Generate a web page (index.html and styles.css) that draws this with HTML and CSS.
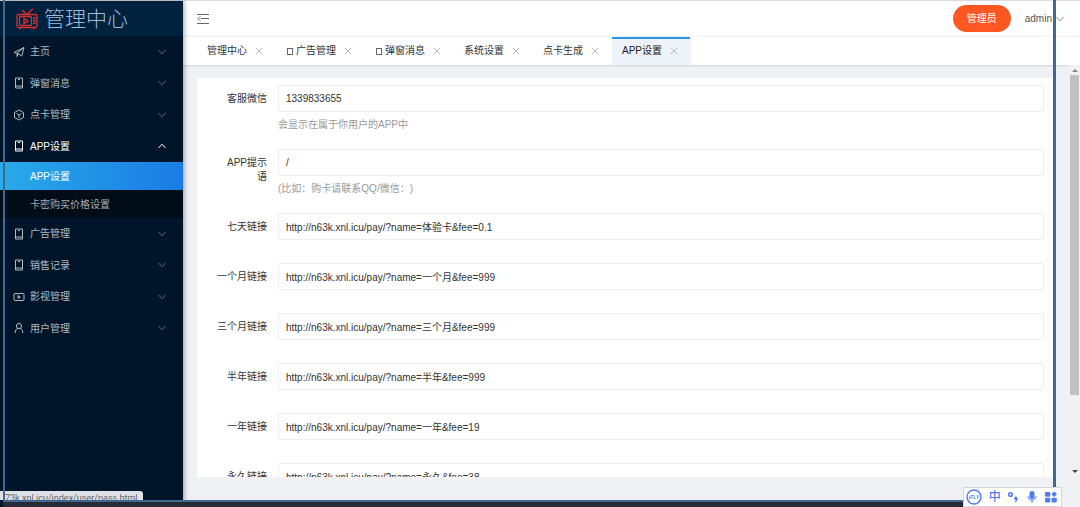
FILE: index.html
```html
<!DOCTYPE html>
<html lang="zh-CN">
<head>
<meta charset="utf-8">
<title>管理中心</title>
<link rel="stylesheet" href="styles.css">
</head>
<body>
<svg class="defs" aria-hidden="true">
  <symbol id="down" viewBox="0 0 10 10"><path d="M1.500 3l3.500 3.800L8.500 3"/></symbol>
  <symbol id="up" viewBox="0 0 10 10"><path d="M1.500 7L5 3.200 8.500 7"/></symbol>
  <symbol id="close" viewBox="0 0 8 8"><path d="M1 1l6 6M7 1L1 7"/></symbol>
  <symbol id="phone" viewBox="0 0 12 12"><path d="M2.500 1h7v10h-7zM2.500 9h7M5 2.500h2"/></symbol>
  <symbol id="plane" viewBox="0 0 12 12"><path d="M1 6.500L11 1.500 8.800 10 5.600 7.900zM11 1.500L4 7.300V10.500L5.600 8"/></symbol>
  <symbol id="cube" viewBox="0 0 12 12"><path d="M6 1l4.500 2.500v5L6 11 1.500 8.500v-5zM3.500 4.500L6 6l2.500-1.500M6 6v3"/></symbol>
  <symbol id="video" viewBox="0 0 12 12"><rect x="1" y="2.500" width="10" height="7" rx="1"/><path d="M5 4.500v3L7.300 6z"/></symbol>
  <symbol id="user" viewBox="0 0 12 12"><circle cx="6" cy="4" r="2.600"/><path d="M2.200 11c0-3 1.300-4.600 3-4.600M9.800 11c0-3-1.300-4.600-3-4.600"/></symbol>
</svg>
<div class="app">
  <aside class="sidebar">
    <div class="logo">
      <svg class="logo-icon" viewBox="0 0 22 22" aria-hidden="true"><path d="M6 2l5 4.500L17 .8"/><rect x="1" y="6.500" width="20" height="13" rx="1.500"/><rect x="3.500" y="8.500" width="12" height="9" rx="1"/><path d="M8 10.500v5l4-2.500zM17 10h3M17 12.500h3M17 15h3M4 20v1.500M18 20v1.500"/></svg>
      <span>管理中心</span>
    </div>
    <nav>
      <ul class="menu">
        <li><button class="item"><svg><use href="#plane"/></svg><span>主页</span><svg class="arrow"><use href="#down"/></svg></button></li>
        <li><button class="item"><svg><use href="#phone"/></svg><span>弹窗消息</span><svg class="arrow"><use href="#down"/></svg></button></li>
        <li><button class="item"><svg><use href="#cube"/></svg><span>点卡管理</span><svg class="arrow"><use href="#down"/></svg></button></li>
        <li><button class="item open"><svg><use href="#phone"/></svg><span>APP设置</span><svg class="arrow"><use href="#up"/></svg></button>
          <div class="submenu"><a class="current" href="#">APP设置</a><a href="#">卡密购买价格设置</a></div></li>
        <li><button class="item"><svg><use href="#phone"/></svg><span>广告管理</span><svg class="arrow"><use href="#down"/></svg></button></li>
        <li><button class="item"><svg><use href="#phone"/></svg><span>销售记录</span><svg class="arrow"><use href="#down"/></svg></button></li>
        <li><button class="item"><svg><use href="#video"/></svg><span>影视管理</span><svg class="arrow"><use href="#down"/></svg></button></li>
        <li><button class="item"><svg><use href="#user"/></svg><span>用户管理</span><svg class="arrow"><use href="#down"/></svg></button></li>
      </ul>
    </nav>
  </aside>
  <div class="main">
    <header class="header">
      <button class="fold" aria-label="折叠菜单"><svg viewBox="0 0 12 12"><path d="M0 1.500h12M4 5.500h8M0 10.500h12M3 3.500L1 5.500l2 2"/></svg></button>
      <button class="role">管理员</button>
      <button class="account">admin<svg><use href="#down"/></svg></button>
    </header>
    <div class="tabs">
      <div class="tab"><a href="#">管理中心</a><button aria-label="关闭"><svg><use href="#close"/></svg></button></div>
      <div class="tab"><i class="box"></i><a href="#">广告管理</a><button aria-label="关闭"><svg><use href="#close"/></svg></button></div>
      <div class="tab"><i class="box"></i><a href="#">弹窗消息</a><button aria-label="关闭"><svg><use href="#close"/></svg></button></div>
      <div class="tab"><a href="#">系统设置</a><button aria-label="关闭"><svg><use href="#close"/></svg></button></div>
      <div class="tab"><a href="#">点卡生成</a><button aria-label="关闭"><svg><use href="#close"/></svg></button></div>
      <div class="tab active"><a href="#">APP设置</a><button aria-label="关闭"><svg><use href="#close"/></svg></button></div>
    </div>
    <div class="content">
      <form class="card">
        <div class="row"><label for="wx">客服微信</label><div class="field"><input id="wx" value="1339833655"><p>会显示在属于你用户的APP中</p></div></div>
        <div class="row"><label for="tip">APP提示<wbr>语</label><div class="field"><input id="tip" value="/"><p>(比如：购卡请联系QQ/微信：)</p></div></div>
        <div class="row"><label for="d7">七天链接</label><div class="field"><input id="d7" value="http://n63k.xnl.icu/pay/?name=体验卡&amp;fee=0.1"></div></div>
        <div class="row"><label for="m1">一个月链接</label><div class="field"><input id="m1" value="http://n63k.xnl.icu/pay/?name=一个月&amp;fee=999"></div></div>
        <div class="row"><label for="m3">三个月链接</label><div class="field"><input id="m3" value="http://n63k.xnl.icu/pay/?name=三个月&amp;fee=999"></div></div>
        <div class="row"><label for="m6">半年链接</label><div class="field"><input id="m6" value="http://n63k.xnl.icu/pay/?name=半年&amp;fee=999"></div></div>
        <div class="row"><label for="y1">一年链接</label><div class="field"><input id="y1" value="http://n63k.xnl.icu/pay/?name=一年&amp;fee=19"></div></div>
        <div class="row"><label for="ever">永久链接</label><div class="field"><input id="ever" value="http://n63k.xnl.icu/pay/?name=永久&amp;fee=38"></div></div>
      </form>
      <div class="scrollbar"><i class="tri-up"></i><i class="thumb"></i><i class="tri-down"></i></div>
    </div>
  </div>
</div>
<div class="status">73k.xnl.icu/index/user/pass.html</div>
<div class="taskbar"></div>
<div class="frame"></div>
<div class="ime">
  <svg viewBox="0 0 16 16" class="ifly"><circle cx="8" cy="8" r="7"/><text x="8" y="10">iFLY</text></svg>
  <span>中</span>
  <svg viewBox="0 0 12 12" class="punct"><circle cx="3.500" cy="3.500" r="1.800"/><path class="solid" d="M8.500 5.500a2 2 0 0 1 2 2.200Q10.500 10.500 8 11.500V10.200q.8-.4.900-1A1.900 1.900 0 0 1 8.500 5.500z"/></svg>
  <svg viewBox="0 0 12 12"><rect class="solid" x="3.500" y="0" width="5" height="8" rx="2.500"/><path d="M2 5c0 5.500 8 5.500 8 0M6 9v3"/></svg>
  <svg viewBox="0 0 12 12" class="solid"><rect x="0" y="1" width="5.300" height="4.800" rx="1"/><path d="M9.200.3L12 3.200 9.200 6 6.300 3.200z"/><rect x="0" y="6.800" width="5.300" height="4.800" rx="1"/><rect x="6.500" y="6.800" width="5.300" height="4.800" rx="1"/></svg>
</div>
</body>
</html>
```
FILE: styles.css
```css
* { box-sizing: border-box; }
body {
  margin: 0;
  font: 10px/14px "Liberation Sans", "Noto Sans CJK SC", sans-serif;
  color: #333;
  overflow: hidden;
}
button, input { font: inherit; color: inherit; border: 0; padding: 0; margin: 0; background: none; }
a { color: inherit; text-decoration: none; }
svg { fill: none; stroke: currentColor; stroke-width: 1; flex: none; }
.defs { position: absolute; width: 0; height: 0; }

.app { display: flex; height: 100vh; border-top: 1px solid #dcdcdc; }

.sidebar {
  flex: none;
  width: 183px;
  background: #001529;
  box-shadow: 1px 0 5px rgba(0, 21, 41, .4);
  z-index: 1;
}
.logo {
  display: flex;
  align-items: center;
  gap: 6px;
  height: 35px;
  padding-left: 16px;
  background: #00223f;
  color: #9dbbdb;
  font-size: 21px;
  font-weight: 300;
  line-height: 30px;
}
.logo-icon { width: 22px; height: 22px; color: #d8302f; stroke-width: 1.300; }
.menu { list-style: none; margin: 0; padding: 0; }
.item {
  display: flex;
  align-items: center;
  width: 100%;
  height: 31px;
  padding: 0 16px 0 13px;
  color: #b3b9bf;
  text-align: left;
}
.menu li:nth-child(even) .item { height: 32px; }
.item svg { width: 12px; height: 12px; }
.item span { flex: 1; margin-left: 5px; padding-top: 1px; }
.item .arrow { width: 10px; height: 10px; color: #5d6c7b; }
.item.open, .item.open .arrow { color: #fff; }
.submenu { background: #000c17; }
.submenu a { display: block; height: 28px; padding-left: 30px; line-height: 30px; color: #a6acb1; }
.submenu .current { background: linear-gradient(90deg, #29aaea, #1a7ce4); color: #fff; }

.main { flex: 1; min-width: 0; display: flex; flex-direction: column; background: #f0f1f5; }
.header {
  display: flex;
  align-items: center;
  height: 35px;
  padding: 0 15px 0 14px;
  background: #fff;
}
.fold { display: flex; margin-right: auto; color: #666; }
.fold svg { width: 12px; height: 12px; }
.role { height: 27px; padding: 0 14px; border-radius: 14px; background: #ff5722; color: #fff; }
.account { display: flex; align-items: center; gap: 3px; margin-left: 14px; color: #555; }
.account svg { width: 10px; height: 10px; color: #888; }

.tabs {
  display: flex;
  height: 29px;
  padding-left: 14px;
  background: #fff;
  border-top: 1px solid #f3f3f3;
  box-shadow: 0 1px 2px rgba(0, 0, 0, .12);
}
.tab { display: flex; align-items: center; padding: 0 12px 0 10px; border-right: 1px solid transparent; }
.tab .box { width: 6px; height: 7px; margin: 0 3px 0 1px; border: 1px solid #666; }
.tab button { display: flex; margin-left: 8px; color: #bbb; }
.tab button svg { width: 8px; height: 8px; }
.tab.active { background: #eef2f9; box-shadow: inset 0 2px #2a93e2; color: #222; }

.content { flex: 1; min-height: 0; display: flex; }
.card {
  flex: 1;
  min-width: 0;
  margin: 13px 16px 30px 14px;
  padding: 7px 9px 0 20px;
  background: #fff;
  overflow: hidden;
}
.row { display: flex; margin-bottom: 23px; }
.row label { flex: none; width: 50px; margin-right: 11px; padding-top: 7px; text-align: right; }
.row:nth-child(2) label { padding-left: 2px; }
.field { flex: 1; min-width: 0; }
.field input {
  display: block;
  width: 100%;
  height: 27px;
  padding: 0 7px;
  border: 1px solid #eee;
  border-radius: 2px;
  background: #fff;
}
.field p { margin: 6px 0 -6px; color: #999; text-spacing-trim: space-all; }

.scrollbar {
  display: flex;
  flex-direction: column;
  align-items: center;
  width: 11px;
  margin-bottom: 26px;
  background: #f1f1f1;
}
.tri-up, .tri-down { border: 3px solid transparent; }
.tri-up { border-top: 0; border-bottom-color: #888; margin: 4px 0 3px; }
.tri-down { border-bottom: 0; border-top-color: #444; margin: auto 0 8px; }
.thumb { width: 9px; height: 77%; background: #c1c1c1; }

.status {
  position: absolute;
  left: 0;
  bottom: 7px;
  z-index: 2;
  height: 9px;
  padding: 0 5px;
  overflow: hidden;
  border-radius: 0 3px 0 0;
  background: #dee1e6;
  color: #5f6368;
  font-family: Roboto, sans-serif;
  font-size: 9px;
  line-height: 15px;
  white-space: nowrap;
}
.taskbar { position: absolute; left: 3px; right: 25px; bottom: 0; z-index: 2; height: 5px; background: #252a35; }
.frame {
  position: absolute;
  top: 0;
  left: 3px;
  right: 24px;
  bottom: 5px;
  z-index: 3;
  border: solid #41698f;
  border-width: 0 3px 2px 2px;
  pointer-events: none;
}
.ime {
  position: absolute;
  right: 18px;
  bottom: 0;
  z-index: 4;
  display: flex;
  align-items: center;
  justify-content: space-between;
  width: 99px;
  height: 20px;
  padding: 0 4px 0 2px;
  border: 1px solid #d5d5da;
  background: #fff;
  color: #4f7df0;
}
.ime svg { width: 12px; height: 12px; }
.ime .ifly { width: 16px; height: 16px; stroke-width: 1.400; }
.ime .punct { stroke-width: 1.500; }
.ime span { font-size: 12px; font-weight: 500; line-height: 18px; }
.ime text { fill: currentColor; stroke: none; font-size: 5px; font-weight: bold; font-style: italic; text-anchor: middle; }
.ime .solid { fill: currentColor; stroke: none; }
```
